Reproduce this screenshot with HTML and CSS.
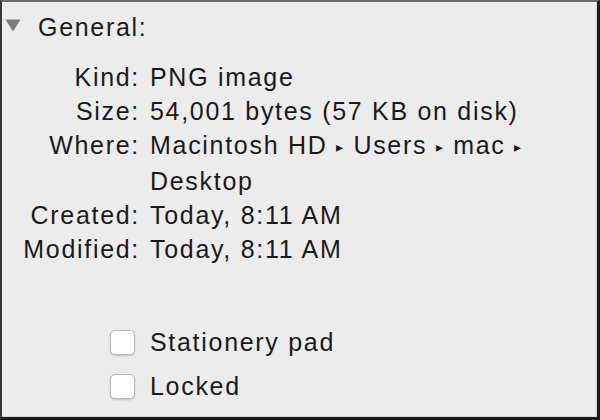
FILE: index.html
```html
<!DOCTYPE html>
<html>
<head>
<meta charset="utf-8">
<link rel="stylesheet" href="styles.css">
</head>
<body>
<div class="panel">
  <div class="section-head">
    <svg class="disclosure" width="16" height="13" viewBox="0 0 16 13"><path d="M0.5 0.5 H15.5 L8 12.5 Z" fill="#7c7c7c"/></svg>
    <span class="section-title">General:</span>
  </div>
  <div class="info">
    <div class="label">Kind:</div><div class="value">PNG image</div>
    <div class="label">Size:</div><div class="value">54,001 bytes (57 KB on disk)</div>
    <div class="label">Where:</div><div class="value">Macintosh HD <span class="sep">▸</span> Users <span class="sep">▸</span> mac <span class="sep">▸</span> Desktop</div>
    <div class="label">Created:</div><div class="value">Today, 8:11 AM</div>
    <div class="label">Modified:</div><div class="value">Today, 8:11 AM</div>
  </div>
  <div class="options">
    <label class="option"><span class="checkbox"></span><span>Stationery pad</span></label>
    <label class="option"><span class="checkbox"></span><span>Locked</span></label>
  </div>
</div>
</body>
</html>
```

FILE: styles.css
```css
html, body {
  margin: 0;
  padding: 0;
  background: #ffffff;
}
.panel {
  box-sizing: border-box;
  width: 600px;
  height: 420px;
  background: #ececec;
  border-top: 2px solid #6a6a6a;
  border-left: 2px solid #3a3a3a;
  border-right: 3px solid #1a1a1a;
  border-bottom: 3px solid #1a1a1a;
  box-shadow: inset -1px -1px 0 #d6d6d6;
  font-family: "Liberation Sans", Arial, sans-serif;
  font-size: 25px;
  line-height: 34px;
  color: #1a1a1a;
  letter-spacing: 1.7px;
}
.section-head {
  display: flex;
  align-items: center;
  padding-top: 8px;
  padding-left: 3px;
  height: 34px;
}
.disclosure {
  display: block;
  margin-right: 17px;
  margin-top: -4px;
}
.info {
  display: grid;
  grid-template-columns: 138px 410px;
  column-gap: 10px;
  margin-top: 16px;
}
.label {
  text-align: right;
}
.sep {
  font-size: 14px;
  vertical-align: 2px;
}
.options {
  display: flex;
  flex-direction: column;
  padding-left: 108px;
  margin-top: 54px;
}
.option {
  display: flex;
  align-items: center;
  gap: 15px;
  height: 44px;
}
.checkbox {
  box-sizing: border-box;
  width: 25px;
  height: 25px;
  background: #ffffff;
  border: 1px solid #b9b9b9;
  border-radius: 5px;
  box-shadow: 0 1px 2px rgba(0,0,0,0.18);
}
```
